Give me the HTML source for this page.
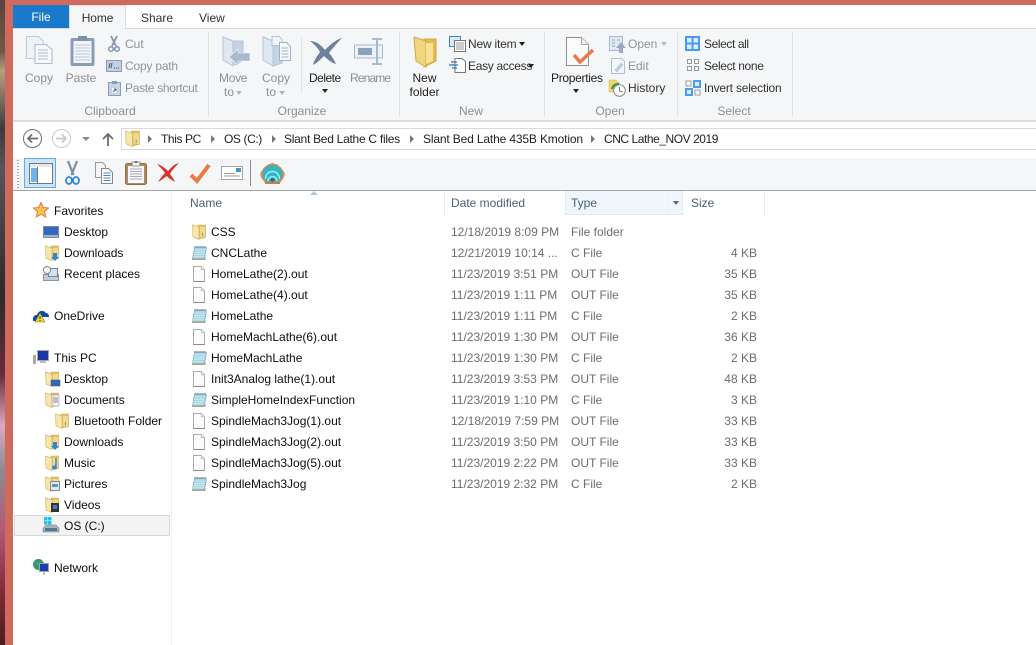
<!DOCTYPE html>
<html><head><meta charset="utf-8">
<style>
html,body{margin:0;padding:0;background:#fff}
#w{position:relative;width:1036px;height:645px;overflow:hidden;background:#fff;font:12px/16px "Liberation Sans",sans-serif;color:#1a1a1a}
#w div{position:absolute;white-space:nowrap}
#w svg{position:absolute;overflow:visible}
.g{color:#8f9499}.d{color:#222}
.lb{color:#8b8f93;text-align:center}
.sep{width:1px;background:#dfe1e3}
.t{color:#0d0d0d}.m{color:#6d6d6d}
.h{color:#4c607a}
.ar{width:0;height:0;border-left:3.5px solid transparent;border-right:3.5px solid transparent;border-top:4px solid #222}
.bc{width:0;height:0;border-top:4px solid transparent;border-bottom:4px solid transparent;border-left:4px solid #777;top:135px}
</style></head><body><div id="w">
<svg width="0" height="0" style="position:absolute"><defs>
<symbol id="fo" viewBox="0 0 16 16"><path d="M7 1h7.500v12.500L7 15z" fill="#e2bf62" stroke="#cfa94d" stroke-width=".6"/><path d="M9 3h5v10H9z" fill="#f3d98d"/><path d="M1.500 1L8 3v12.500L2 13z" fill="#f8e7ad" stroke="#d6b65f" stroke-width=".7"/><path d="M11 9h1v3h-1z" fill="#5e9fd0"/></symbol>
<symbol id="no" viewBox="0 0 16 16"><path d="M3.500 2.500h12L13.500 13.500h-12z" fill="#a8d6e4" stroke="#7fabbe" stroke-width=".7"/><path d="M3.500 5h10.500M3 7.300h10.500M2.600 9.600h10.500M2.200 11.800h10.500" stroke="#d2ecf4" stroke-width=".8"/><path d="M3.500 1.700h12" stroke="#55707f" stroke-dasharray="1 1" stroke-width="1.400"/><path d="M1 14.500h12.800l.7-2" fill="none" stroke="#b39f7c" stroke-width="1.100"/></symbol>
<symbol id="bl" viewBox="0 0 16 16"><path d="M2.500.5h7.800l3.200 3.200v11.800h-11z" fill="#fbfbfb" stroke="#a9a9a9"/><path d="M10.300.5v3.200h3.200" fill="#e9e9e9" stroke="#c4c4c4"/><path d="M2.500 15.500h11" stroke="#8c8c8c"/></symbol>
</defs></svg>

<!-- background edges -->
<div style="left:0;top:0;width:5px;height:645px;background:linear-gradient(#5b423b 0,#6e5a4b 8%,#b79f7f 11%,#3b3a3c 20%,#55565a 26%,#2c2a2a 46%,#6a2a3a 58%,#d9a9c0 66%,#8e8a90 73%,#b55a78 82%,#7c2a3a 92%,#4a1e22 100%)"></div>
<div style="left:5px;top:0;width:8px;height:645px;background:#d06a5c"></div>
<div style="left:5px;top:0;width:1031px;height:5px;background:#d06a5c"></div>

<!-- tabs -->
<div style="left:13px;top:5px;width:56px;height:23px;background:#1979ca;color:#fff;text-align:center;line-height:24px">File</div>
<div style="left:69px;top:5px;width:57px;height:24px;background:#f5f6f7;border:1px solid #dadbdc;border-bottom:0;box-sizing:border-box;text-align:center;line-height:25px;color:#333;letter-spacing:-.1px">Home</div>
<div style="left:141px;top:10px;color:#333">Share</div>
<div style="left:199px;top:10px;color:#333">View</div>

<!-- ribbon -->
<div style="left:13px;top:28px;width:1023px;height:92px;background:#f5f6f7;border-top:1px solid #dadbdc;box-sizing:border-box"></div>
<div style="left:70px;top:28px;width:55px;height:2px;background:#f5f6f7"></div>
<div style="left:13px;top:120px;width:1023px;height:2px;background:#dadbdc"></div>
<div class="sep" style="left:208px;top:32px;height:85px"></div>
<div class="sep" style="left:301px;top:38px;height:55px"></div>
<div class="sep" style="left:399px;top:32px;height:85px"></div>
<div class="sep" style="left:544px;top:32px;height:85px"></div>
<div class="sep" style="left:677px;top:32px;height:85px"></div>
<div class="sep" style="left:792px;top:32px;height:85px"></div>

<!-- Clipboard -->
<svg style="left:26px;top:36px" width="28" height="28"><path d="M.5.500h12l5 5v17H.5z" fill="#eef3fa" stroke="#bccadf"/><path d="M9 8.500h11l6 5v14H9z" fill="#f7f9fd" stroke="#a9bad4"/><path d="M12 14h10M12 17h10M12 20h10M12 23h10" stroke="#a9bad4"/></svg>
<svg style="left:70px;top:36px" width="25" height="30"><rect x=".5" y="2" width="24" height="28" rx="2" fill="#8a9db8"/><rect x="3.500" y="5" width="18" height="22" fill="#f3f5f9"/><path d="M5 9h15M5 12h15M5 15h15M5 18h15M5 21h15M5 24h15" stroke="#bcc7d8"/><rect x="8" y="0" width="9" height="5" fill="#7f90a8"/></svg>
<svg style="left:108px;top:36px" width="12" height="16"><path d="M3 0l5 10M9 0L4 10" stroke="#8493ab" stroke-width="1.800" fill="none"/><circle cx="3" cy="13" r="2.300" fill="none" stroke="#8493ab" stroke-width="1.500"/><circle cx="9" cy="13" r="2.300" fill="none" stroke="#8493ab" stroke-width="1.500"/></svg>
<svg style="left:106px;top:60px" width="16" height="12"><rect x=".5" y=".5" width="15" height="11" fill="#c3cfe3" stroke="#8a9db8"/><path d="M4 3l-1 5M6 3L5 8M8 8h1M10 8h1M12 8h1" stroke="#556"/></svg>
<svg style="left:108px;top:81px" width="13" height="15"><rect x=".5" y="1.500" width="12" height="13" fill="#c8d2e1" stroke="#8a9db8"/><rect x="4" y="0" width="5" height="3" fill="#8a9db8"/><path d="M4 7h5v5H4z" fill="#f3f5f9"/><path d="M5 11l3-3M6 8h2v2" stroke="#4a6a94" fill="none"/></svg>
<div class="lb" style="left:20px;top:70px;width:38px">Copy</div>
<div class="lb" style="left:62px;top:70px;width:38px">Paste</div>
<div class="g" style="left:125px;top:36px">Cut</div>
<div class="g" style="left:125px;top:58px;letter-spacing:-.2px">Copy path</div>
<div class="g" style="left:125px;top:80px;letter-spacing:-.3px">Paste shortcut</div>
<div class="lb" style="left:70px;top:103px;width:80px">Clipboard</div>

<!-- Organize -->
<svg style="left:222px;top:36px" width="29" height="32"><path d="M1 1l9 4h11v18l-6 6-5-1-9-5z" fill="#c3d2e6" stroke="#b5c3d8"/><path d="M1 1l10 4v25L1 24z" fill="#dfe7f2" stroke="#b5c3d8"/><path d="M7 21l9-8v4h12v8H16v4z" fill="#a9b8cc" stroke="#f5f6f7" stroke-width=".6"/></svg>
<svg style="left:262px;top:36px" width="30" height="32"><path d="M1 1l10 4v25L1 24z" fill="#dfe7f2" stroke="#b5c3d8"/><path d="M11 5h9v22l-9 3z" fill="#c5d3e6" stroke="#b5c3d8"/><path d="M10 .5h7l3 3v6h-10z" fill="#f2f5fa" stroke="#b5c3d8"/><path d="M17.500 6.500h7l4 4v14h-11z" fill="#f7f9fd" stroke="#9fb0c8"/><path d="M19.500 12h7M19.500 15h7M19.500 18h7M19.500 21h7" stroke="#9fb0c8"/></svg>
<div class="lb" style="left:219px;top:70px;width:28px;letter-spacing:-.3px">Move</div>
<div class="lb" style="left:224px;top:84px">to</div><div class="ar" style="left:236px;top:91px;border-top-color:#b5b5b5"></div>
<div class="lb" style="left:262px;top:70px;width:28px">Copy</div>
<div class="lb" style="left:266px;top:84px">to</div><div class="ar" style="left:279px;top:91px;border-top-color:#b5b5b5"></div>
<svg style="left:310px;top:38px" width="32" height="28"><path d="M0 3c6 0 11 4 15 9C20 7 25 2 32 0 27 5 22 11 19 15c3 3 5 7 7 11-4-1-8-4-12-8-3 3-7 7-11 9 1-5 5-10 7-13C8 10 4 6 0 3z" fill="#6d809c"/></svg>
<svg style="left:354px;top:38px" width="30" height="28"><rect x=".5" y="7" width="28" height="13" fill="#eef2f8" stroke="#a9b8cc"/><rect x="4" y="10" width="14" height="7" fill="#8fa2bd"/><path d="M18 1h10M18 26h10M23 1v25" stroke="#a9b8cc" stroke-width="2" fill="none"/></svg>
<div class="d" style="left:309px;top:70px;letter-spacing:-.5px">Delete</div>
<div class="ar" style="left:322px;top:89px"></div>
<div class="lb" style="left:350px;top:70px;letter-spacing:-.85px">Rename</div>
<div class="lb" style="left:262px;top:103px;width:80px">Organize</div>

<!-- New -->
<svg style="left:413px;top:36px" width="26" height="32"><path d="M11 3h12v22l-12 6z" fill="#e5bb50" stroke="#cda743"/><path d="M1 1l12 4v26L3 25z" fill="#f2d67c" stroke="#cda743"/><path d="M13 7h7v18l-7 3z" fill="#f8e29a"/></svg>
<svg style="left:449px;top:36px" width="17" height="16"><rect x=".5" y=".5" width="11" height="10" fill="#dbe8f8" stroke="#3f83c9"/><rect x="5.500" y="4.500" width="11" height="11" fill="#fff" stroke="#777"/><path d="M7 7h8M7 9h8M7 11h8M7 13h8" stroke="#999"/></svg>
<svg style="left:449px;top:58px" width="17" height="15"><path d="M6 .5h7l3.500 3v11H6z" fill="#fff" stroke="#777"/><path d="M0 7h9M2 4h6M3 10h5" stroke="#2a72c4" stroke-width="1.200"/></svg>
<div class="d" style="left:409px;top:70px;width:31px;text-align:center">New</div>
<div class="d" style="left:409px;top:84px;width:31px;text-align:center">folder</div>
<div class="d" style="left:468px;top:36px;color:#333;letter-spacing:-.2px">New item</div><div class="ar" style="left:519px;top:42px"></div>
<div class="d" style="left:468px;top:58px;color:#333;letter-spacing:-.3px">Easy access</div><div class="ar" style="left:528px;top:64px"></div>
<div class="lb" style="left:441px;top:103px;width:60px">New</div>

<!-- Open -->
<svg style="left:566px;top:37px" width="28" height="30"><path d="M.5.500h15l7 7v21H.5z" fill="#fbfbfb" stroke="#8e8e8e"/><path d="M15.500.5v7h7" fill="#eee" stroke="#aaa"/><path d="M8 18l6 7L27 13" fill="none" stroke="#e9794a" stroke-width="3.500"/></svg>
<svg style="left:609px;top:36px" width="17" height="17"><rect x=".5" y=".5" width="13" height="14" fill="#e3e9f2" stroke="#a9b8cc"/><path d="M3 4h3M3 7h3M3 10h3M8 4h3" stroke="#99a9bf"/><path d="M12 6l5 6h-3v5h-4v-5H7z" fill="#99aac2"/></svg>
<svg style="left:610px;top:58px" width="16" height="16"><path d="M1.500.5h10l3 3v12h-13z" fill="#f3f6fa" stroke="#b0bfd2"/><path d="M5 12l6-7 2 2-6 7z" fill="#c2d0e2" stroke="#9eb0c8" stroke-width=".5"/></svg>
<svg style="left:609px;top:80px" width="17" height="17"><path d="M0 0h7l1 2h2v10H0z" fill="#f1d27b" stroke="#d8b659" stroke-width=".5"/><circle cx="10.500" cy="10.500" r="5.800" fill="#fff" stroke="#888"/><path d="M10.500 7v4l3 1" stroke="#777" fill="none"/><path d="M3 9a6 6 0 0 1 7-5" stroke="#2f9e2f" stroke-width="2" fill="none"/></svg>
<div class="d" style="left:551px;top:70px;letter-spacing:-.3px">Properties</div>
<div class="ar" style="left:573px;top:89px"></div>
<div class="g" style="left:628px;top:36px">Open</div><div class="ar" style="left:661px;top:42px;border-top-color:#bbb"></div>
<div class="g" style="left:628px;top:58px">Edit</div>
<div class="d" style="left:628px;top:80px;color:#333">History</div>
<div class="lb" style="left:580px;top:103px;width:60px">Open</div>

<!-- Select -->
<svg style="left:685px;top:36px" width="15" height="15"><rect width="15" height="15" fill="#4a9bee"/><rect x="2" y="2" width="4.500" height="4.500" fill="#dcecff"/><rect x="8.500" y="2" width="4.500" height="4.500" fill="#dcecff"/><rect x="2" y="8.500" width="4.500" height="4.500" fill="#dcecff"/><rect x="8.500" y="8.500" width="4.500" height="4.500" fill="#dcecff"/></svg>
<svg style="left:687px;top:59px" width="13" height="13" fill="none" stroke="#9a9a9a"><rect x=".5" y=".5" width="4" height="4"/><rect x="7.500" y=".5" width="4" height="4"/><rect x=".5" y="7.500" width="4" height="4"/><rect x="7.500" y="7.500" width="4" height="4"/></svg>
<svg style="left:685px;top:80px" width="16" height="16"><rect x="1" y="1" width="5" height="5" fill="#fff" stroke="#999"/><rect x="8" y="0" width="8" height="8" fill="#4a9bee"/><rect x="10" y="2" width="4" height="4" fill="#dcecff"/><rect x="0" y="8" width="8" height="8" fill="#4a9bee"/><rect x="2" y="10" width="4" height="4" fill="#dcecff"/><rect x="10" y="10" width="5" height="5" fill="#fff" stroke="#999"/></svg>
<div class="d" style="left:704px;top:36px;color:#333;letter-spacing:-.4px">Select all</div>
<div class="d" style="left:704px;top:58px;color:#333;letter-spacing:-.35px">Select none</div>
<div class="d" style="left:704px;top:80px;color:#333;letter-spacing:-.2px">Invert selection</div>
<div class="lb" style="left:704px;top:103px;width:60px">Select</div>

<!-- Address bar -->
<svg style="left:23px;top:129px" width="20" height="20" fill="none" stroke="#6f6f6f"><circle cx="9.500" cy="9.500" r="9"/><path d="M15 9.500H5M9 5.500l-4 4 4 4" stroke-width="1.800"/></svg>
<svg style="left:52px;top:129px" width="20" height="20" fill="none" stroke="#c9c9c9"><circle cx="9.500" cy="9.500" r="9"/><path d="M4 9.500h10M10 5.500l4 4-4 4" stroke-width="1.800"/></svg>
<div class="ar" style="left:82px;top:137px;border-left-width:4px;border-right-width:4px;border-top-color:#8a8a8a"></div>
<svg style="left:102px;top:132px" width="12" height="14" fill="none" stroke="#6b6b6b" stroke-width="1.800"><path d="M6 14V2M1 7l5-5 5 5"/></svg>
<div style="left:121px;top:128px;width:915px;height:22px;box-sizing:border-box;border:1px solid #d9d9d9;border-right:0;background:#fff"></div>
<svg style="left:124px;top:130px;width:17px;height:17px" viewBox="0 0 16 16"><use href="#fo"/></svg>
<div class="bc" style="left:148px"></div>
<div style="left:161px;top:131px;color:#222;letter-spacing:-.4px">This PC</div>
<div class="bc" style="left:211px"></div>
<div style="left:224px;top:131px;color:#222;letter-spacing:-.4px">OS (C:)</div>
<div class="bc" style="left:272px"></div>
<div style="left:284px;top:131px;color:#222;letter-spacing:-.27px">Slant Bed Lathe C files</div>
<div class="bc" style="left:410px"></div>
<div style="left:423px;top:131px;color:#222;letter-spacing:-.15px">Slant Bed Lathe 435B Kmotion</div>
<div class="bc" style="left:591px"></div>
<div style="left:604px;top:131px;color:#222;letter-spacing:-.45px">CNC Lathe_NOV 2019</div>

<!-- Toolbar -->
<div style="left:13px;top:158px;width:1023px;height:33px;background:#f5f6f7;border-bottom:1px solid #a3a3a3;box-sizing:border-box"></div>
<div style="left:17px;top:160px;width:2px;height:28px;background:repeating-linear-gradient(#a8a8a8 0 1px,transparent 1px 3px)"></div>
<div style="left:24px;top:158px;width:32px;height:30px;box-sizing:border-box;background:#cce4f7;border:1px solid #6aa9e4"></div>
<svg style="left:29px;top:163px" width="24" height="21"><rect x=".5" y=".5" width="23" height="20" fill="#fff" stroke="#777"/><rect x="1" y="1" width="22" height="3" fill="#e8e8e8"/><rect x="2" y="5" width="6" height="14" fill="#6cb4f2"/><path d="M8.500 4v16" stroke="#777"/></svg>
<svg style="left:65px;top:161px" width="15" height="24" fill="none" stroke="#2d87d8" stroke-width="1.800"><path d="M3 0l5.500 14" stroke="#7a8ea6" stroke-width="2.200"/><path d="M12 0L6.500 14" stroke="#7a8ea6" stroke-width="2.200"/><ellipse cx="4" cy="19.500" rx="3" ry="3.500"/><ellipse cx="11" cy="19.500" rx="3" ry="3.500"/></svg>
<svg style="left:95px;top:162px" width="18" height="22"><path d="M.5.500h7l3 3v12H.5z" fill="#f6f6f6" stroke="#999"/><path d="M6.500 6.500h7l4 4v11h-11z" fill="#fff" stroke="#888"/><path d="M8.500 11h7M8.500 13.500h7M8.500 16h7M8.500 18.500h7" stroke="#3f8ad1"/></svg>
<svg style="left:125px;top:161px" width="22" height="24"><rect x=".5" y="2.500" width="21" height="21" rx="2" fill="#b08a5c" stroke="#8f6c42"/><rect x="3" y="5" width="16" height="17" fill="#f6f7f8"/><path d="M5 8h12M5 10.500h12M5 13h12M5 15.500h12M5 18h12" stroke="#aab"/><rect x="7" y="1" width="8" height="4" fill="#f4f4f4" stroke="#777" stroke-width=".7"/><rect x="9.500" y="0" width="3" height="2" fill="#777"/></svg>
<svg style="left:157px;top:163px" width="22" height="20"><path d="M0 1c4 1 8 4 11 7 3-3 6-7 11-8-3 3-7 7-9 11 2 3 4 5 5 8-3-2-7-4-8-6-3 2-5 4-9 6 2-3 4-6 7-9C6 7 3 4 0 1z" fill="#d3352a"/></svg>
<svg style="left:189px;top:163px" width="22" height="21"><path d="M2 12l6 6L20 2" fill="none" stroke="#ec7a45" stroke-width="4"/></svg>
<svg style="left:221px;top:166px" width="23" height="15"><rect x=".5" y=".5" width="21" height="13" fill="#fff" stroke="#a5a5a5"/><path d="M3 7.500h11M3 10h16" stroke="#9a9a9a"/><rect x="15" y="2" width="5" height="4" fill="#3f9ac9"/></svg>
<div style="left:250px;top:160px;width:1px;height:26px;background:#8a8a8a"></div>
<svg style="left:260px;top:163px" width="25" height="22"><path d="M12.500 0c-1 0-2 1-3 1S7 2 6 3 4 4 3 6 1 8 .5 10 1 15 3 17l2 3h15l2-3c2-2 3-5 2.500-7S23 8 22 6s-2-2-3-3-2-2-3.500-2-2-1-3-1z" fill="#e08a48"/><path d="M12.500 2C7 2 2.500 6 2.500 11c0 3 1.500 5 3.500 7.500h13c2-2.500 3.500-4.500 3.500-7.500 0-5-4.500-9-10-9z" fill="#35b4c6"/><path d="M8 18c0-6 9-6 9 0M5.500 16c0-10 14-10 14 0" fill="none" stroke="#a4ebf3" stroke-width="1.400"/><circle cx="12.500" cy="17" r="1.800" fill="#0d6f86"/><path d="M5 20h15" stroke="#d07c3c" stroke-width="2"/></svg>

<!-- Nav pane -->
<div style="left:171px;top:191px;width:1px;height:454px;background:#f0f0f0"></div>
<div style="left:14px;top:515px;width:156px;height:21px;box-sizing:border-box;background:#f3f3f3;border:1px solid #d9d9d9"></div>
<svg style="left:33px;top:202px" width="16" height="16"><path d="M8 .5l2.200 5 5.300.5-4 3.500 1.200 5.500L8 12.200 3.300 15l1.200-5.500-4-3.500 5.300-.5z" fill="#fbc64b" stroke="#e2793c"/></svg>
<div class="t" style="left:54px;top:203px">Favorites</div>
<svg style="left:43px;top:226px" width="16" height="12"><rect x=".5" y=".5" width="15" height="11" fill="#2f69c1" stroke="#7c8a9a"/><path d="M1 9h14v2H1z" fill="#a3b4c6"/></svg>
<div class="t" style="left:64px;top:224px">Desktop</div>
<svg style="left:44px;top:245px;width:16px;height:16px" viewBox="0 0 16 16"><use href="#fo"/><path d="M9 8h4v4h2l-4 4-4-4h2z" fill="#2e86d6"/></svg>
<div class="t" style="left:64px;top:245px">Downloads</div>
<svg style="left:43px;top:266px" width="17" height="15"><rect x=".5" y="8.500" width="15" height="6" fill="#c6cdd5" stroke="#8a949f"/><rect x="5.500" y="2.500" width="9" height="8" fill="#cfe2f3" stroke="#77838f"/><circle cx="4" cy="4" r="3.500" fill="#fff" stroke="#77838f"/></svg>
<div class="t" style="left:64px;top:266px">Recent places</div>
<svg style="left:33px;top:308px" width="16" height="15"><path d="M0 10c1-3 3-3 4-3 1-4 6-6 9-2 2 0 3 2 3 4H8L6 13H0z" fill="#0c4da8"/><path d="M7 5l5 9H2z" fill="#f6d028" stroke="#7a6a10" stroke-width=".5"/><path d="M7 8v3M7 12v1" stroke="#333"/></svg>
<div class="t" style="left:54px;top:308px">OneDrive</div>
<svg style="left:33px;top:350px" width="16" height="15"><rect x="0" y="5" width="3" height="9" fill="#aaa"/><rect x="4.500" y=".5" width="11" height="10" fill="#1a38a8" stroke="#a8a8a8"/><path d="M7 11h6v2H7z" fill="#bbb"/></svg>
<div class="t" style="left:54px;top:350px">This PC</div>
<svg style="left:44px;top:371px;width:16px;height:16px" viewBox="0 0 16 16"><use href="#fo"/><rect x="7" y="9" width="9" height="6" fill="#2f69c1" stroke="#556" stroke-width=".5"/></svg>
<div class="t" style="left:64px;top:371px">Desktop</div>
<svg style="left:44px;top:392px;width:16px;height:16px" viewBox="0 0 16 16"><use href="#fo"/><rect x="8" y="3" width="7" height="11" fill="#f3f3f3" stroke="#889" stroke-width=".5"/><path d="M9 6h5M9 8h5M9 10h5" stroke="#889"/></svg>
<div class="t" style="left:64px;top:392px">Documents</div>
<svg style="left:54px;top:413px;width:16px;height:16px" viewBox="0 0 16 16"><use href="#fo"/></svg>
<div class="t" style="left:74px;top:413px">Bluetooth Folder</div>
<svg style="left:44px;top:434px;width:16px;height:16px" viewBox="0 0 16 16"><use href="#fo"/><path d="M9 8h4v4h2l-4 4-4-4h2z" fill="#2e86d6"/></svg>
<div class="t" style="left:64px;top:434px">Downloads</div>
<svg style="left:44px;top:455px;width:16px;height:16px" viewBox="0 0 16 16"><use href="#fo"/><path d="M12 3v9" stroke="#2e86d6" stroke-width="1.500"/><ellipse cx="10.500" cy="12.500" rx="2.500" ry="2" fill="#2e86d6"/></svg>
<div class="t" style="left:64px;top:455px">Music</div>
<svg style="left:44px;top:476px;width:16px;height:16px" viewBox="0 0 16 16"><use href="#fo"/><rect x="6.500" y="5.500" width="9" height="9" fill="#dfe8ee" stroke="#889"/><rect x="8" y="8" width="6" height="3" fill="#5a9ab8"/></svg>
<div class="t" style="left:64px;top:476px">Pictures</div>
<svg style="left:44px;top:497px;width:16px;height:16px" viewBox="0 0 16 16"><use href="#fo"/><rect x="7" y="6" width="8" height="9" fill="#333"/><rect x="9" y="8" width="4" height="4" fill="#3a80c8"/></svg>
<div class="t" style="left:64px;top:497px">Videos</div>
<svg style="left:43px;top:517px" width="17" height="16"><rect x="1" y="0" width="3.500" height="3.500" fill="#1cc6f0"/><rect x="5" y="0" width="3.500" height="3.500" fill="#1cc6f0"/><rect x="1" y="4" width="3.500" height="3.500" fill="#1cc6f0"/><rect x="5" y="4" width="3.500" height="3.500" fill="#1cc6f0"/><path d="M3 8h10l3 3v4H0v-4z" fill="#a9b2ba" stroke="#6f7880" stroke-width=".5"/><rect x="2" y="11" width="12" height="3" fill="#4c7c92"/></svg>
<div class="t" style="left:64px;top:518px">OS (C:)</div>
<svg style="left:33px;top:559px" width="16" height="16"><circle cx="5.500" cy="5.500" r="5.500" fill="#3a9a4a"/><path d="M2 3h5v3H3z" fill="#3f8fe0"/><rect x="6.500" y="4.500" width="9" height="8" fill="#1d3fae" stroke="#9aa7b4"/><path d="M11 13v3" stroke="#889"/></svg>
<div class="t" style="left:54px;top:560px">Network</div>

<!-- Column headers -->
<svg style="left:310px;top:191px" width="8" height="4"><path d="M0 4l4-4 4 4z" fill="#a9c9e2"/></svg>
<div class="h" style="left:190px;top:195px">Name</div>
<div style="left:444px;top:191px;width:1px;height:24px;background:#e3ecf5"></div>
<div class="h" style="left:451px;top:195px">Date modified</div>
<div style="left:565px;top:191px;width:118px;height:24px;box-sizing:border-box;background:#f0f6fb;border:1px solid #deebf6;border-top:0"></div>
<div style="left:668px;top:191px;width:1px;height:23px;background:#e9f1f8"></div>
<div class="h" style="left:571px;top:195px">Type</div>
<div class="ar" style="left:673px;top:201px;border-top-color:#56667c"></div>
<div class="h" style="left:691px;top:195px">Size</div>
<div style="left:764px;top:191px;width:1px;height:24px;background:#e3ecf5"></div>

<!-- Rows -->
<svg style="left:191px;top:224px;width:16px;height:16px" viewBox="0 0 16 16"><use href="#fo"/></svg>
<div class="t" style="left:211px;top:224px">CSS</div><div class="m" style="left:451px;top:224px">12/18/2019 8:09 PM</div><div class="m" style="left:571px;top:224px">File folder</div>

<svg style="left:191px;top:245px;width:16px;height:16px" viewBox="0 0 16 16"><use href="#no"/></svg>
<div class="t" style="left:211px;top:245px">CNCLathe</div><div class="m" style="left:451px;top:245px">12/21/2019 10:14 ...</div><div class="m" style="left:571px;top:245px">C File</div><div class="m" style="right:279px;top:245px">4 KB</div>

<svg style="left:191px;top:266px;width:16px;height:16px" viewBox="0 0 16 16"><use href="#bl"/></svg>
<div class="t" style="left:211px;top:266px">HomeLathe(2).out</div><div class="m" style="left:451px;top:266px">11/23/2019 3:51 PM</div><div class="m" style="left:571px;top:266px">OUT File</div><div class="m" style="right:279px;top:266px">35 KB</div>

<svg style="left:191px;top:287px;width:16px;height:16px" viewBox="0 0 16 16"><use href="#bl"/></svg>
<div class="t" style="left:211px;top:287px">HomeLathe(4).out</div><div class="m" style="left:451px;top:287px">11/23/2019 1:11 PM</div><div class="m" style="left:571px;top:287px">OUT File</div><div class="m" style="right:279px;top:287px">35 KB</div>

<svg style="left:191px;top:308px;width:16px;height:16px" viewBox="0 0 16 16"><use href="#no"/></svg>
<div class="t" style="left:211px;top:308px">HomeLathe</div><div class="m" style="left:451px;top:308px">11/23/2019 1:11 PM</div><div class="m" style="left:571px;top:308px">C File</div><div class="m" style="right:279px;top:308px">2 KB</div>

<svg style="left:191px;top:329px;width:16px;height:16px" viewBox="0 0 16 16"><use href="#bl"/></svg>
<div class="t" style="left:211px;top:329px">HomeMachLathe(6).out</div><div class="m" style="left:451px;top:329px">11/23/2019 1:30 PM</div><div class="m" style="left:571px;top:329px">OUT File</div><div class="m" style="right:279px;top:329px">36 KB</div>

<svg style="left:191px;top:350px;width:16px;height:16px" viewBox="0 0 16 16"><use href="#no"/></svg>
<div class="t" style="left:211px;top:350px">HomeMachLathe</div><div class="m" style="left:451px;top:350px">11/23/2019 1:30 PM</div><div class="m" style="left:571px;top:350px">C File</div><div class="m" style="right:279px;top:350px">2 KB</div>

<svg style="left:191px;top:371px;width:16px;height:16px" viewBox="0 0 16 16"><use href="#bl"/></svg>
<div class="t" style="left:211px;top:371px">Init3Analog lathe(1).out</div><div class="m" style="left:451px;top:371px">11/23/2019 3:53 PM</div><div class="m" style="left:571px;top:371px">OUT File</div><div class="m" style="right:279px;top:371px">48 KB</div>

<svg style="left:191px;top:392px;width:16px;height:16px" viewBox="0 0 16 16"><use href="#no"/></svg>
<div class="t" style="left:211px;top:392px">SimpleHomeIndexFunction</div><div class="m" style="left:451px;top:392px">11/23/2019 1:10 PM</div><div class="m" style="left:571px;top:392px">C File</div><div class="m" style="right:279px;top:392px">3 KB</div>

<svg style="left:191px;top:413px;width:16px;height:16px" viewBox="0 0 16 16"><use href="#bl"/></svg>
<div class="t" style="left:211px;top:413px">SpindleMach3Jog(1).out</div><div class="m" style="left:451px;top:413px">12/18/2019 7:59 PM</div><div class="m" style="left:571px;top:413px">OUT File</div><div class="m" style="right:279px;top:413px">33 KB</div>

<svg style="left:191px;top:434px;width:16px;height:16px" viewBox="0 0 16 16"><use href="#bl"/></svg>
<div class="t" style="left:211px;top:434px">SpindleMach3Jog(2).out</div><div class="m" style="left:451px;top:434px">11/23/2019 3:50 PM</div><div class="m" style="left:571px;top:434px">OUT File</div><div class="m" style="right:279px;top:434px">33 KB</div>

<svg style="left:191px;top:455px;width:16px;height:16px" viewBox="0 0 16 16"><use href="#bl"/></svg>
<div class="t" style="left:211px;top:455px">SpindleMach3Jog(5).out</div><div class="m" style="left:451px;top:455px">11/23/2019 2:22 PM</div><div class="m" style="left:571px;top:455px">OUT File</div><div class="m" style="right:279px;top:455px">33 KB</div>

<svg style="left:191px;top:476px;width:16px;height:16px" viewBox="0 0 16 16"><use href="#no"/></svg>
<div class="t" style="left:211px;top:476px">SpindleMach3Jog</div><div class="m" style="left:451px;top:476px">11/23/2019 2:32 PM</div><div class="m" style="left:571px;top:476px">C File</div><div class="m" style="right:279px;top:476px">2 KB</div>
</div></body></html>
